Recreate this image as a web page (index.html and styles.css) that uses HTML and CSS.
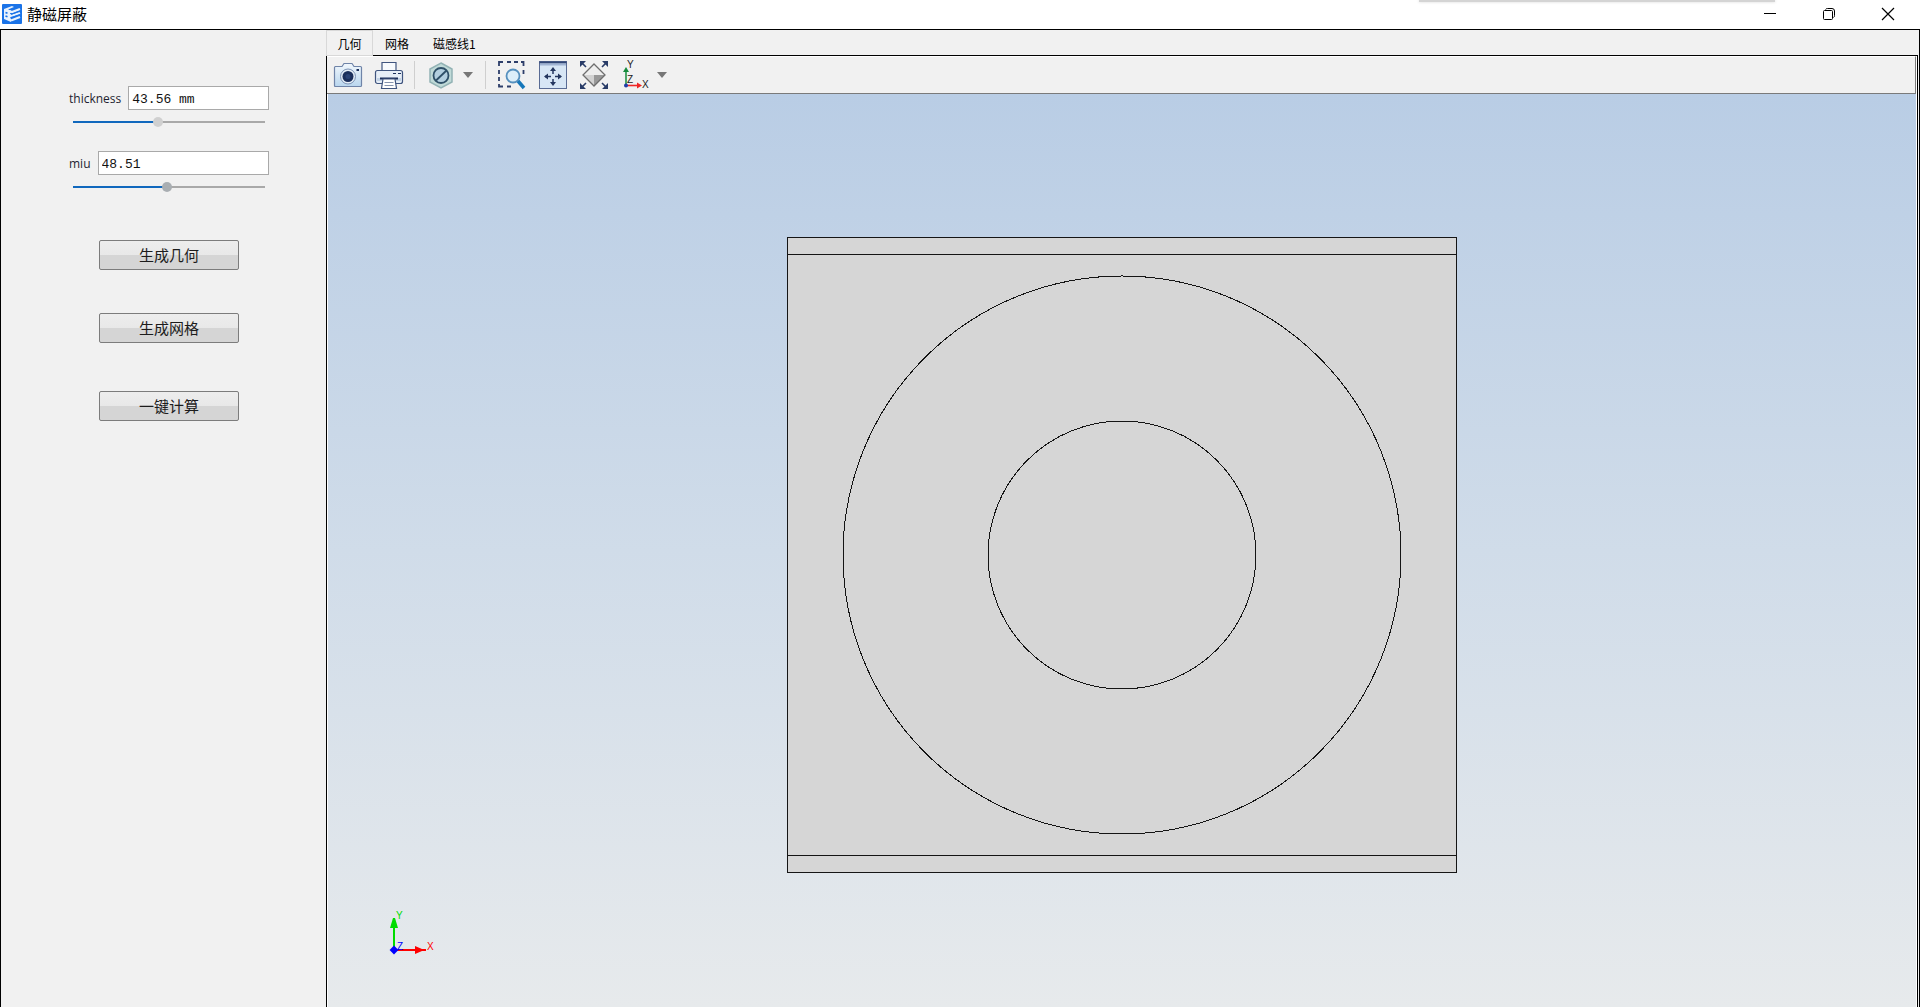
FILE: index.html
```html
<!DOCTYPE html>
<html lang="zh-CN">
<head>
<meta charset="utf-8">
<title>静磁屏蔽</title>
<link rel="stylesheet" href="styles.css">
</head>
<body>
<header class="titlebar">
  <svg class="logo" width="20" height="20" viewBox="0 0 20 20" aria-hidden="true">
    <rect width="20" height="20" rx="1" fill="#1a73e8"/>
    <path d="M2 5l8-3 2 1-6 2.500 3 1V18l-7-3z" fill="#e8f2fd"/>
    <path d="M3.500 8.500l2 .8M3.500 12l2 .8" stroke="#1a73e8" stroke-width="1.600"/>
    <path d="M7 7l3 1 8-3M9 12l9-3M9 16.500l9-3.500" fill="none" stroke="#e8f2fd" stroke-width="2.200"/>
    <path d="M8 9.500l2 .5 8-3M8 14l10-3.500" fill="none" stroke="#1a73e8" stroke-width="1"/>
  </svg>
  <h1 class="title">静磁屏蔽</h1>
  <div class="popup-shadow"></div>
  <div class="window-controls">
    <button class="window-button" type="button" aria-label="最小化"><svg width="14" height="14" viewBox="0 0 14 14"><path d="M1 6.500h12" stroke="#000"/></svg></button>
    <button class="window-button" type="button" aria-label="还原"><svg width="14" height="14" viewBox="0 0 14 14" fill="none" stroke="#000"><rect x="1.500" y="3.500" width="9" height="9" rx="1"/><path d="M3.500 2.500Q4 1.500 5.500 1.500H10Q12.500 1.500 12.500 4V8.500Q12.500 10 11.500 10.500"/></svg></button>
    <button class="window-button" type="button" aria-label="关闭"><svg width="14" height="14" viewBox="0 0 14 14"><path d="M1 1l12 12M13 1L1 13" stroke="#000" stroke-width="1.200"/></svg></button>
  </div>
</header>
<main class="workspace">
  <aside class="sidebar">
    <div class="parameter">
      <div class="field"><label for="thickness">thickness</label><input class="value" id="thickness" type="text" value="43.56 mm"></div>
      <input class="slider slider-light" type="range" min="0" max="99" step="0.01" value="43.56" aria-label="thickness" style="--value: 44%">
    </div>
    <div class="parameter">
      <div class="field"><label for="miu">miu</label><input class="value" id="miu" type="text" value="48.51"></div>
      <input class="slider" type="range" min="0" max="99" step="0.01" value="48.51" aria-label="miu" style="--value: 49%">
    </div>
    <div class="actions">
      <button class="action" type="button">生成几何</button>
      <button class="action" type="button">生成网格</button>
      <button class="action action-run" type="button">一键计算</button>
    </div>
  </aside>
  <section class="view">
    <nav class="tabs" role="tablist">
      <button class="tab tab-active" type="button" role="tab" aria-selected="true">几何</button>
      <button class="tab" type="button" role="tab">网格</button>
      <button class="tab" type="button" role="tab">磁感线1</button>
    </nav>
    <div class="pane">
      <div class="toolbar">
        <button class="tool" type="button" aria-label="截图"><svg width="30" height="30" viewBox="0 0 30 30">
          <defs><linearGradient id="body" x2="0" y2="1"><stop stop-color="#f2f8fd"/><stop offset="1" stop-color="#b9d6ee"/></linearGradient></defs>
          <path d="M2 6.500h7l2-3h8l2 3h6.500q1 0 1 1v18q0 1-1 1H2.500q-1 0-1-1v-18q0-1 1-1z" fill="url(#body)" stroke="#6f84a8" stroke-width="1.200"/>
          <circle cx="15" cy="16.500" r="7.500" fill="#e4edf6" stroke="#7d93b5"/><circle cx="15" cy="16.500" r="5.500" fill="#1b2f5b"/><circle cx="15" cy="16.500" r="2.500" fill="#2a4274"/><path d="M23.500 10h2.500" stroke="#1b2f5b" stroke-width="2"/></svg></button>
        <button class="tool" type="button" aria-label="打印"><svg width="30" height="30" viewBox="0 0 30 30" stroke="#40557f" stroke-width="1.200">
          <path d="M8 11V2.500h14V11" fill="#f7fafd"/><rect x="1.500" y="10.500" width="27" height="13" rx="2" fill="#e6eef7"/><path d="M3 19.500h24" stroke="#c3d3e6" stroke-width="3"/><path d="M19 13.500h3M24 13.500h3" stroke="#1b2f5b"/><path d="M6 18.500h18" stroke="#1b2f5b" stroke-width="2"/><path d="M9 19h12l1.500 9.500h-15z" fill="#fff"/><path d="M10.500 22.500h9M10.500 25.500h9" stroke="#8593ad"/></svg></button>
        <span class="separator"></span>
        <button class="tool" type="button" aria-label="选择"><svg width="30" height="30" viewBox="0 0 30 30">
          <path d="M15 3l11 6v13l-11 6-11-6V9z" fill="#c0dad8" stroke="#93b3b5" stroke-width="1.500"/><circle cx="15" cy="15.500" r="7.500" fill="#b3cfdf" stroke="#2f5068" stroke-width="1.800"/><path d="M10 20.500L20.500 10.500" stroke="#2f5068" stroke-width="1.800"/></svg></button>
        <button class="dropdown" type="button" aria-label="选择选项"><svg width="10" height="6" viewBox="0 0 10 6"><path d="M0 0h10L5 6z" fill="#777"/></svg></button>
        <span class="separator"></span>
        <button class="tool" type="button" aria-label="框选缩放"><svg width="30" height="30" viewBox="0 0 30 30" fill="none">
          <path d="M2 6V2h4M10 2h4M17 2h4M24 2h2.500v4M2 10v4M2 17v4M2 24v2.500h4M10 26.500h4M26.500 10v4" stroke="#2d3e6a" stroke-width="1.800"/><circle cx="16" cy="16" r="6.500" fill="#dceef9" stroke="#5690be" stroke-width="1.800"/><path d="M21 21l6 7" stroke="#1677b9" stroke-width="3.500"/></svg></button>
        <button class="tool" type="button" aria-label="适合窗口"><svg width="30" height="30" viewBox="0 0 30 30">
          <rect x="1.500" y="1.500" width="27" height="27" fill="#d7e6f5" stroke="#596b94"/><path d="M1.500 2.500h27" stroke="#304675" stroke-width="2"/><path d="M2 4.500h26" stroke="#9fb3d2" stroke-width="2"/><path d="M15 9v5M15 19v5M7 16.500h6M17 16.500h6" stroke="#24365f" stroke-width="1.500"/><path d="M15 7l3 4h-6zM15 26l3-4h-6zM6 16.500l4-3v6zM24 16.500l-4-3v6z" fill="#24365f"/></svg></button>
        <button class="tool" type="button" aria-label="缩放到范围"><svg width="30" height="30" viewBox="0 0 30 30">
          <path d="M15 4l11 11H4z" fill="#eee"/><path d="M4 15h11v11z" fill="#d2d2d2"/><path d="M15 15h11L15 26z" fill="#999"/><path d="M15 4l11 11-11 11L4 15z" fill="none" stroke="#6e6e6e" stroke-width="1.300"/><path d="M2 2l5 5M28 2l-5 5M2 28l5-5M28 28l-5-5" stroke="#293c68" stroke-width="1.600"/><path d="M1 1h6L1 7zM29 1h-6l6 6zM1 29h6l-6-6zM29 29h-6l6-6z" fill="#293c68"/></svg></button>
        <button class="tool" type="button" aria-label="视图方向"><svg width="30" height="30" viewBox="0 0 30 30">
          <path d="M6 24V10" stroke="#249447" stroke-width="1.600"/><path d="M6 7l3 5H3z" fill="#178b3c"/><path d="M6 25.500h13" stroke="#ef2626" stroke-width="1.600"/><path d="M22 25.500l-5 3v-6z" fill="#ef2626"/><circle cx="6" cy="25.500" r="2" fill="#203caa"/><text class="axis-label" x="7" y="8">Y</text><text class="axis-label" x="7" y="23">Z</text><text class="axis-label" x="22" y="28">X</text></svg></button>
        <button class="dropdown" type="button" aria-label="视图方向选项"><svg width="10" height="6" viewBox="0 0 10 6"><path d="M0 0h10L5 6z" fill="#777"/></svg></button>
      </div>
      <div class="canvas">
        <svg class="geometry" width="670" height="636" viewBox="0 0 670 636" role="img" aria-label="几何模型">
          <g fill="#d6d6d6" stroke="#151515" stroke-width="1" shape-rendering="crispEdges"><rect x=".5" y=".5" width="669" height="635"/><path d="M0 17.500h670M0 618.500h670"/><circle cx="335" cy="318" r="279"/><circle cx="335" cy="318" r="134"/></g>
        </svg>
        <svg class="triad" width="46" height="46" viewBox="0 0 46 46" aria-hidden="true">
          <path d="M7 39V14" stroke="#00dc00" stroke-width="2"/><path d="M6 7h2l3 10H3z" fill="#00dc00"/>
          <path d="M9 39h20" stroke="#f00" stroke-width="2"/><path d="M28 35l7 3h4v2h-4l-7 3z" fill="#f00"/>
          <path d="M7 36l3 3-3 3-3-3z" fill="#00f" stroke="#00f" stroke-width="2"/>
          <text class="triad-label" x="9" y="8" fill="#00dc00">Y</text><text class="triad-label" x="10" y="39" fill="#00f">Z</text><text class="triad-label" x="40" y="39" fill="#f00">X</text>
        </svg>
      </div>
    </div>
  </section>
</main>
</body>
</html>
```
FILE: styles.css
```css
* { box-sizing: border-box; }
body {
  margin: 0;
  height: 100vh;
  display: flex;
  flex-direction: column;
  overflow: hidden;
  background: #f1f1f1;
  color: #000;
  font: 12px "Noto Sans CJK SC", sans-serif;
}
button { border: 0; padding: 0; background: none; font: inherit; color: inherit; }
svg { display: block; }

.titlebar {
  position: relative;
  height: 29px;
  flex: none;
  display: flex;
  align-items: center;
  gap: 5px;
  padding: 0 3px 6px 2px;
  background: #fff;
}
.logo { margin-top: 5px; }
.title { margin: 4px 0 0; font-size: 15px; line-height: 20px; font-weight: 400; }
.popup-shadow {
  position: absolute;
  top: 0;
  right: 145px;
  width: 356px;
  height: 2px;
  background: #d4d4d4;
  box-shadow: 0 0 3px #d4d4d4;
}
.window-controls { display: flex; margin: 5px 0 0 auto; }
.window-button { width: 59px; height: 24px; display: grid; place-items: center; }

.workspace { flex: 1; min-height: 0; display: flex; border: 1px solid #000; border-bottom: 0; }
.sidebar { width: 325px; flex: none; padding: 56px 57px 0 68px; }
.parameter { height: 65px; }
.field { display: flex; align-items: center; gap: 7px; height: 24px; }
.field label { padding-top: 1px; font: 12px "Open Sans", sans-serif; color: #1e1e30; }
.value {
  flex: 1;
  min-width: 0;
  height: 24px;
  padding: 2px 3px 0;
  border: 1px solid #a9a9a9;
  background: #fff;
  color: #111;
  font: 13px "Liberation Mono", monospace;
}
.slider {
  appearance: none;
  display: block;
  width: 192px;
  height: 10px;
  margin: 7px 4px 0;
  background: linear-gradient(#1068bd, #1068bd) 0 4px / var(--value) 2px no-repeat, linear-gradient(#a9a9a9, #a9a9a9) 0 4px / 100% 2px no-repeat;
}
.slider::-webkit-slider-thumb { appearance: none; width: 10px; height: 10px; border-radius: 50%; background: #a9aeb2; }
.slider-light::-webkit-slider-thumb { background: #d0d0d0; }
.actions { display: flex; flex-direction: column; gap: 43px; padding: 24px 30px; }
.action {
  width: 140px;
  height: 30px;
  border: 1px solid #7c7c7c;
  border-radius: 2px;
  background: linear-gradient(#ededed, #e8e8e8 50%, #d5d5d5 50%);
  font-size: 15px;
  line-height: 26px;
  color: #1c1c1c;
}
.action-run { margin-top: 5px; }

.view { flex: 1; min-width: 0; display: flex; flex-direction: column; padding-right: 1px; }
.tabs { height: 25px; flex: none; display: flex; }
.tab { height: 25px; padding: 2px 12px 0; line-height: 18px; }
.tab-active {
  position: relative;
  z-index: 1;
  width: 47px;
  height: 26px;
  padding: 2px 0 0;
  border: 1px solid #d8d8d8;
  background: #f1f1f1;
}
.pane { flex: 1; min-height: 0; display: flex; flex-direction: column; border: 1px solid #000; border-bottom: 0; padding-right: 1px; background: #fff; }
.toolbar {
  height: 38px;
  flex: none;
  display: flex;
  align-items: center;
  border: 1px solid #fff;
  border-left: 0;
  border-right-color: #7a7a7a;
  border-bottom-color: #7a7a7a;
  background: #f1f1f1;
}
.tool { width: 41px; height: 34px; display: grid; place-items: center; }
.dropdown { width: 19px; height: 34px; padding-left: 2px; }
.separator { width: 1px; height: 28px; margin: 0 5px; background: #cfcfcf; }
.axis-label { font: 10px "Liberation Sans", sans-serif; fill: #222; }
.canvas {
  position: relative;
  flex: 1;
  min-height: 0;
  display: flex;
  align-items: center;
  justify-content: center;
  padding-top: 8px;
  margin-left: 1px;
  background: linear-gradient(#b9cde5, #d0dce9 50%, #e7eaec);
}
.geometry { flex: none; }
.triad { position: absolute; left: 59px; bottom: 50px; overflow: visible; }
.triad-label { font: 10px "Liberation Sans", sans-serif; }
```
